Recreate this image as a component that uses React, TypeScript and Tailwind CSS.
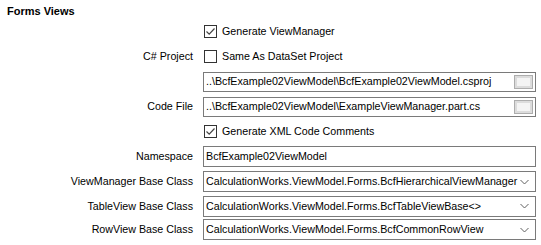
import React from 'react';

const font = { fontFamily: '"Liberation Sans", Arial, sans-serif' };

function CheckBox({ checked, label }: { checked: boolean; label: string }) {
  return (
    <div className="flex items-center gap-[5px]">
      <div className="w-[13px] h-[13px] border border-[#333333] bg-white flex items-center justify-center">
        {checked && (
          <svg width="11" height="11" viewBox="0 0 11 11">
            <path d="M1.5 5.5 L4.2 8.2 L9.5 2.5" fill="none" stroke="#444" strokeWidth="1.2" />
          </svg>
        )}
      </div>
      <span>{label}</span>
    </div>
  );
}

function PathBox({ value }: { value: string }) {
  return (
    <div className="w-[333px] h-[20px] border border-[#7a7a7a] bg-white flex items-center pl-[2px] pr-[2px]">
      <span className="flex-1 whitespace-nowrap overflow-hidden">{value}</span>
      <div className="w-[19px] h-[14px] border border-[#adadad] bg-[#dcdcdc] p-[2px]">
        <div className="w-full h-full bg-[#f4f4f4]" />
      </div>
    </div>
  );
}

function TextBox({ value }: { value: string }) {
  return (
    <div className="w-[333px] h-[21px] border border-[#7a7a7a] bg-white flex items-center pl-[2px]">
      <span className="whitespace-nowrap">{value}</span>
    </div>
  );
}

function ComboBox({ value }: { value: string }) {
  return (
    <div className="w-[333px] h-[21px] border border-[#7a7a7a] bg-white flex items-center pl-[2px] pr-[6px]">
      <span className="flex-1 whitespace-nowrap overflow-hidden">{value}</span>
      <svg width="9" height="6" viewBox="0 0 9 6">
        <path d="M0.5 1 L4.5 5 L8.5 1" fill="none" stroke="#606060" strokeWidth="1" />
      </svg>
    </div>
  );
}

function Row({ label, children, h = 25 }: { label?: string; children: React.ReactNode; h?: number }) {
  return (
    <div className="flex items-center" style={{ height: h }}>
      <div className="w-[193px] text-right pr-0 whitespace-nowrap">{label ?? ''}</div>
      <div className="ml-[10px]">{children}</div>
    </div>
  );
}

export default function App() {
  return (
    <div className="w-[541px] h-[245px] bg-white text-black text-[10.7px] overflow-hidden" style={font}>
      <div className="pl-[7px] pt-[3px] h-[19px] font-bold text-[11px]">Forms Views</div>
      <div className="flex flex-col">
        <Row h={25}>
          <div className="ml-[1px]"><CheckBox checked label="Generate ViewManager" /></div>
        </Row>
        <Row label="C# Project" h={25}>
          <div className="ml-[1px]"><CheckBox checked={false} label="Same As DataSet Project" /></div>
        </Row>
        <Row h={25}>
          <PathBox value="..\BcfExample02ViewModel\BcfExample02ViewModel.csproj" />
        </Row>
        <Row label="Code File" h={25}>
          <PathBox value="..\BcfExample02ViewModel\ExampleViewManager.part.cs" />
        </Row>
        <Row h={25}>
          <div className="ml-[1px]"><CheckBox checked label="Generate XML Code Comments" /></div>
        </Row>
        <Row label="Namespace" h={25}>
          <TextBox value="BcfExample02ViewModel" />
        </Row>
        <Row label="ViewManager Base Class" h={25}>
          <ComboBox value="CalculationWorks.ViewModel.Forms.BcfHierarchicalViewManager" />
        </Row>
        <Row label="TableView Base Class" h={24}>
          <ComboBox value="CalculationWorks.ViewModel.Forms.BcfTableViewBase<>" />
        </Row>
        <Row label="RowView Base Class" h={23}>
          <ComboBox value="CalculationWorks.ViewModel.Forms.BcfCommonRowView" />
        </Row>
      </div>
    </div>
  );
}
